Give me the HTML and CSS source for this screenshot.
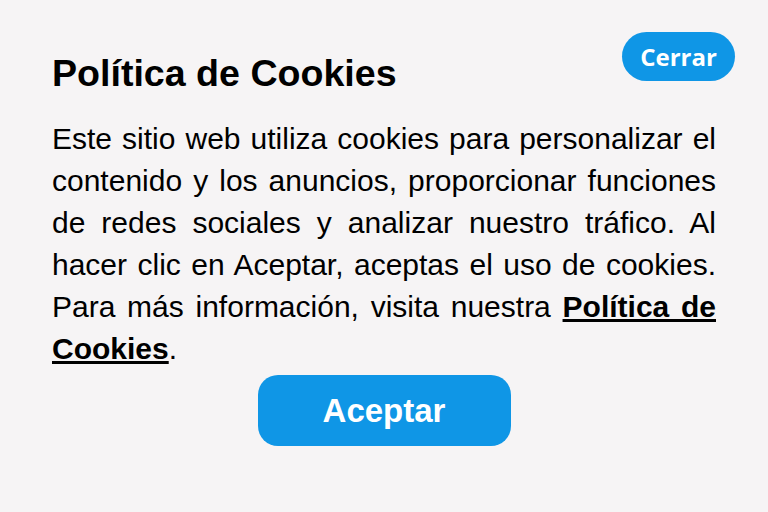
FILE: index.html
```html
<!DOCTYPE html>
<html lang="es">
<head>
<meta charset="utf-8">
<link rel="stylesheet" href="styles.css">
</head>
<body>
<div class="dialog">
  <button class="close">Cerrar</button>
  <h1 class="title">Política de Cookies</h1>
  <p class="text">Este sitio web utiliza cookies para personalizar el contenido y los anuncios, proporcionar funciones de redes sociales y analizar nuestro tráfico. Al hacer clic en Aceptar, aceptas el uso de cookies. Para más información, visita nuestra <a class="link" href="#">Política de Cookies</a>.</p>
  <div class="actions"><button class="accept">Aceptar</button></div>
</div>
</body>
</html>
```
FILE: styles.css
```css
html, body {
  margin: 0;
  padding: 0;
  background: #f6f4f5;
}
.dialog {
  position: relative;
  width: 768px;
  height: 512px;
  box-sizing: border-box;
  padding: 52px 52px 0 52px;
  font-family: "Liberation Sans", Arial, sans-serif;
  color: #000;
}
.close {
  position: absolute;
  top: 32px;
  right: 33px;
  width: 113px;
  height: 49px;
  border: none;
  border-radius: 25px;
  background: #0f96e6;
  color: #fff;
  font-family: "Open Sans", sans-serif;
  font-weight: 700;
  font-size: 24px;
  padding: 0;
  cursor: pointer;
}
.title {
  margin: 0;
  font-size: 37.6px;
  line-height: 43px;
  font-weight: 700;
}
.text {
  margin: 23px 0 0 0;
  font-size: 30px;
  line-height: 42px;
  text-align: justify;
}
.link {
  color: #000;
  font-weight: 700;
  text-decoration: underline;
}
.actions {
  display: flex;
  justify-content: center;
  margin-top: 5px;
}
.accept {
  width: 253px;
  height: 71px;
  border: none;
  border-radius: 20px;
  background: #0f96e6;
  color: #fff;
  font-family: "Liberation Sans", Arial, sans-serif;
  font-weight: 700;
  font-size: 33px;
  padding: 0;
  cursor: pointer;
}
```
